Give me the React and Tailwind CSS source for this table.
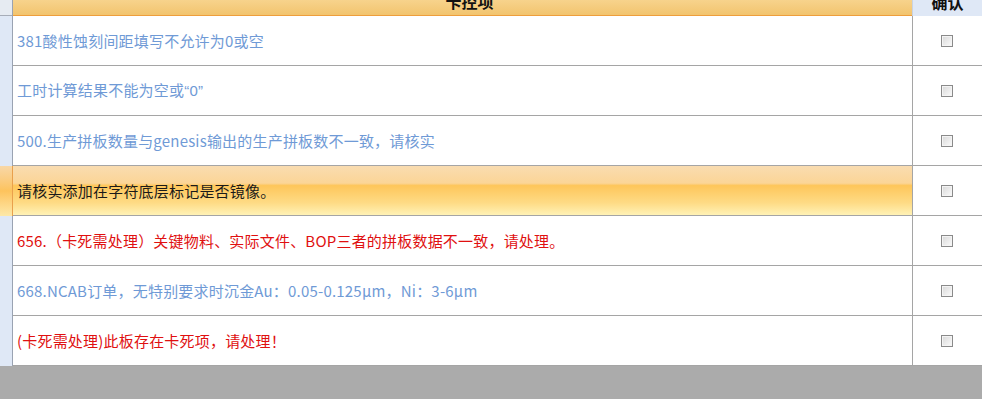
import React from 'react';

const Q = ({ children }) => <span style={{ fontFamily: '"Liberation Sans", sans-serif' }}>{children}</span>;

const rows = [
  { text: '381酸性蚀刻间距填写不允许为0或空', tone: 'blue' },
  { text: <>工时计算结果不能为空或<Q>“0”</Q></>, tone: 'blue' },
  { text: '500.生产拼板数量与genesis输出的生产拼板数不一致，请核实', tone: 'blue' },
  { text: '请核实添加在字符底层标记是否镜像。', tone: 'selected' },
  { text: '656.（卡死需处理）关键物料、实际文件、BOP三者的拼板数据不一致，请处理。', tone: 'red' },
  { text: '668.NCAB订单，无特别要求时沉金Au：0.05-0.125μm，Ni：3-6μm', tone: 'blue' },
  { text: '(卡死需处理)此板存在卡死项，请处理！', tone: 'red' },
];

const textColor = {
  blue: 'text-[#6f9ad6]',
  red: 'text-[#e01010]',
  selected: 'text-[#1a1a1a]',
};

const Checkbox = () => (
  <span className="block w-[12px] h-[12px] border border-[#8a8a8a] bg-gradient-to-br from-[#d8d8d8] to-[#fbfbfb] shadow-[inset_0_0_0_1px_#f4f4f4]" />
);

const App = () => {
  return (
    <div
      className="w-[982px] h-[399px] overflow-hidden bg-[#ababab] flex flex-col"
      style={{ fontFamily: '"Noto Sans CJK SC", "Noto Sans", sans-serif' }}
    >
      {/* encabezado */}
      <div className="flex h-[16px] shrink-0 overflow-hidden">
        <div className="w-[12px] bg-[#e6ebf2] border-b border-[#a7adb8]" />
        <div className="w-[1px] bg-[#9aa3b2]" />
        <div className="w-[899px] bg-gradient-to-b from-[#f7d38c] to-[#f2c46e] border-b border-[#ee9e3c] flex justify-center items-end">
          <span className="text-[16px] leading-[20px] font-bold text-[#111] mb-[4px] -mr-[14px]">卡控项</span>
        </div>
        <div className="flex-1 bg-[#dfe8f6] border-l border-[#c9d3e2] flex justify-center items-end">
          <span className="text-[16px] leading-[20px] font-bold text-[#111] mb-[4px]">确认</span>
        </div>
      </div>

      {rows.map((r, i) => {
        const sel = r.tone === 'selected';
        return (
          <div key={i} className="flex h-[50px] shrink-0 bg-white">
            <div className={`w-[12px] ${sel ? 'bg-gradient-to-b from-[#f8d7a6] via-[#fdc35c] to-[#fde9a8]' : 'bg-[#dfe8f6]'}`} />
            <div className={`w-[1px] ${sel ? 'bg-[#e9a04c]' : 'bg-[#9aa3b2]'}`} />
            <div
              className={`w-[899px] flex items-center pl-[4px] border-b border-[#a5a5a5] ${
                sel ? 'bg-[linear-gradient(to_bottom,#f9dcb0_0%,#fbd597_35%,#fec65a_40%,#fedb85_75%,#fff2b6_100%)]' : ''
              }`}
            >
              <span className={`text-[15px] leading-[20px] tracking-[0.2px] [text-spacing-trim:space-all] ${textColor[r.tone]}`}>{r.text}</span>
            </div>
            <div className="w-[1px] bg-[#a5a5a5]" />
            <div className="flex-1 flex items-center justify-center border-b border-[#a5a5a5] pr-[1px]">
              <Checkbox />
            </div>
          </div>
        );
      })}
    </div>
  );
};

export default App;
